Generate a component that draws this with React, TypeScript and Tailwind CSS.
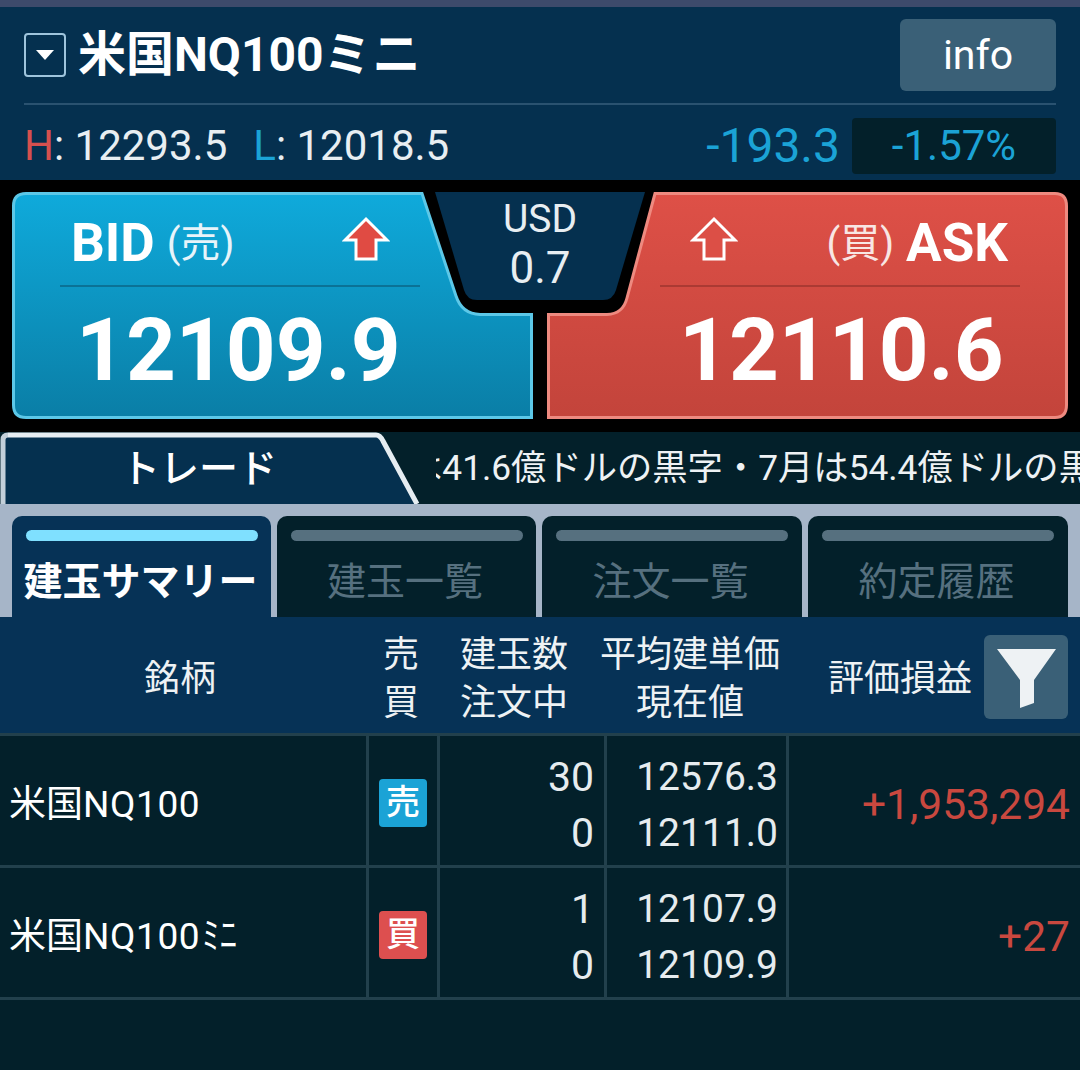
const font = { fontFamily: '"Roboto","Noto Sans CJK JP",sans-serif' };

function Arrow({ fill }: { fill: string }) {
  return (
    <svg width="48" height="46" viewBox="0 0 48 46">
      <path d="M24 3 L45 24 L34 24 L34 43 L14 43 L14 24 L3 24 Z" fill={fill} stroke="#fff" strokeWidth="3" strokeLinejoin="miter" />
    </svg>
  );
}

function BidShape() {
  return (
    <svg className="absolute inset-0" width="521" height="227" viewBox="0 0 521 227">
      <defs>
        <linearGradient id="bidg" x1="0" y1="0" x2="0" y2="1">
          <stop offset="0" stopColor="#0faadb" />
          <stop offset="1" stopColor="#0a7ea6" />
        </linearGradient>
      </defs>
      <path
        d="M14 1.5 H410 L444 104 Q450 122 468 122.5 H519.5 V225.5 H14 Q1.5 225.5 1.5 213 V14 Q1.5 1.5 14 1.5 Z"
        fill="url(#bidg)"
        stroke="#5cc8e8"
        strokeWidth="3"
      />
    </svg>
  );
}

function AskShape() {
  return (
    <svg className="absolute inset-0" width="521" height="227" viewBox="0 0 521 227">
      <defs>
        <linearGradient id="askg" x1="0" y1="0" x2="0" y2="1">
          <stop offset="0" stopColor="#de5047" />
          <stop offset="1" stopColor="#c3443b" />
        </linearGradient>
      </defs>
      <path
        d="M108 1.5 H508 Q519.5 1.5 519.5 14 V213 Q519.5 225.5 508 225.5 H1.5 V122.5 H60 Q76 122 80 106 Z"
        fill="url(#askg)"
        stroke="#ee8a80"
        strokeWidth="3"
      />
    </svg>
  );
}

function SubTab({ label, active }: { label: string; active?: boolean }) {
  return (
    <div className={`rounded-t-[10px] pt-[14px] flex flex-col items-center ${active ? 'bg-[#063256]' : 'bg-[#03202a]'}`}>
      <div className={`h-[11px] w-[232px] rounded-full ${active ? 'bg-[#7fe0ff]' : 'bg-[#56707f]'}`} />
      <div className={`mt-[18px] text-[39px] leading-[46px] whitespace-nowrap ${active ? 'text-white font-bold pr-[2px]' : 'text-[#56707f] pr-[3px]'}`}>{label}</div>
    </div>
  );
}

function Row({ name, mini, side, a, b, c, d, pl }: { name: string; mini?: boolean; side: string; a: string; b: string; c: string; d: string; pl: string }) {
  return (
    <div className="grid grid-cols-[369px_71px_167px_182px_291px] h-[132px] border-b-[3px] border-[#22404c]">
      <div className="flex items-center pl-[9px] pt-[8px] text-[37px] text-white border-r-[3px] border-[#22404c]">
        <span>米国<span className="tracking-[0.6px]">{name}</span></span>
        {mini && <span className="inline-block w-[38px] ml-[2px] whitespace-nowrap origin-left scale-x-[0.48]">ミニ</span>}
      </div>
      <div className="flex items-center justify-center pt-[4px] border-r-[3px] border-[#22404c]">
        <div className={`w-[48px] h-[48px] rounded-[4px] flex items-center justify-center text-[34px] font-medium text-white ${side === '売' ? 'bg-[#1ba3d6]' : 'bg-[#dd4f4f]'}`}>{side}</div>
      </div>
      <div className="flex flex-col justify-center items-end pr-[10px] pt-[9px] text-[41px] leading-[56px] text-[#e6ecef] border-r-[3px] border-[#22404c]">
        <div>{a}</div>
        <div>{b}</div>
      </div>
      <div className="flex flex-col justify-center items-end pr-[8px] pt-[9px] text-[39px] leading-[56px] text-[#e6ecef] border-r-[3px] border-[#22404c]">
        <div>{c}</div>
        <div>{d}</div>
      </div>
      <div className="flex items-center justify-end pr-[10px] pt-[8px] text-[42.5px] text-[#c9483f]">{pl}</div>
    </div>
  );
}

export default function App() {
  return (
    <div className="w-[1080px] h-[1070px] bg-[#03202a] flex flex-col overflow-hidden" style={font}>
      <div className="h-[7px] bg-[#3d4a6b]" />

      <header className="h-[173px] bg-[#05304f] flex flex-col">
        <div className="h-[98px] shrink-0 mx-[24px] flex items-center border-b-[2px] border-[#2a5270]">
          <div className="w-[42px] h-[44px] rounded-[4px] border-[2px] border-[#9fc4dc] flex items-center justify-center">
            <svg width="20" height="12" viewBox="0 0 20 12"><path d="M1 1 H19 L10 11 Z" fill="#fff" /></svg>
          </div>
          <div className="ml-[12px] text-[48px] leading-[56px] font-bold text-white whitespace-nowrap">米国NQ100<span className="tracking-[1px]">ミニ</span></div>
          <div className="ml-auto w-[156px] h-[72px] rounded-[6px] bg-[#3a6077] flex items-center justify-center text-[41px] leading-[48px] text-white">info</div>
        </div>
        <div className="flex-1 flex items-center pl-[24px] pr-[24px] pt-[7px]">
          <div className="text-[42px] leading-[56px] text-[#e8eef2] whitespace-nowrap flex items-center">
            <span className="text-[#d5504f]">H</span>
            <span>: 12293.5</span>
            <span className="ml-[26px] text-[#1ba3d6]">L</span>
            <span>: 12018.5</span>
          </div>
          <div className="ml-auto text-[48px] leading-[56px] text-[#1ba3d6]">-193.3</div>
          <div className="ml-[12px] w-[204px] h-[56px] rounded-[4px] bg-[#03202a] flex items-center justify-center text-[42px] leading-[50px] text-[#1ba3d6]">-1.57%</div>
        </div>
      </header>

      <section className="relative h-[252px] bg-black px-[12px] pt-[12px] flex gap-[14px]">
        <div className="relative w-[521px] h-[227px] text-white">
          <BidShape />
          <div className="relative ml-[48px] mr-[113px] h-[95px] border-b-[2px] border-[#0b7296] flex items-center pl-[11px] pt-[11px]">
            <span className="text-[53px] font-bold">BID</span>
            <span className="ml-[12px] text-[40px] text-[#e8f4fa]">(売)</span>
            <span className="ml-auto mr-[30px] mt-[-10px]"><Arrow fill="#e04b43" /></span>
          </div>
          <div className="relative mt-[4px] text-[87px] font-bold leading-[118px] pl-[64px] whitespace-nowrap">12109.9</div>
        </div>
        <div className="relative w-[521px] h-[227px] text-white">
          <AskShape />
          <div className="relative ml-[113px] mr-[48px] h-[95px] border-b-[2px] border-[#ab3a33] flex items-center pr-[12px] pt-[11px]">
            <span className="ml-[30px] mt-[-10px]"><Arrow fill="#dc4f46" /></span>
            <span className="ml-auto text-[40px] text-[#f8e6e4]">(買)</span>
            <span className="ml-[12px] text-[53px] font-bold">ASK</span>
          </div>
          <div className="relative mt-[4px] text-[87px] font-bold leading-[118px] pl-[132px] whitespace-nowrap">12110.6</div>
        </div>
        <div className="absolute left-[433px] top-[12px] w-[214px] h-[108px] flex flex-col items-center text-[#e8eef2]">
          <svg className="absolute inset-0" width="214" height="108" viewBox="0 0 214 108">
            <path d="M2 0 H212 L183 98 Q180 108 170 108 H44 Q34 108 31 98 Z" fill="#05304f" />
          </svg>
          <div className="relative text-[39px] leading-[46px] mt-[4px]">USD</div>
          <div className="relative text-[44px] leading-[50px] mt-[1px]">0.7</div>
        </div>
      </section>

      <section className="relative h-[72px] bg-[#03202a] flex overflow-hidden">
        <div className="relative w-[420px] shrink-0 flex items-center justify-center">
          <svg className="absolute inset-0" width="420" height="72" viewBox="0 0 420 72">
            <path d="M3 72 V8 Q3 3 8 3 H376 Q380 3 383 9 L417 72 Z" fill="#05304f" />
            <path d="M3 72 V8 Q3 3 8 3" fill="none" stroke="#c3cfd9" strokeWidth="5" />
            <path d="M8 3 H376 Q380 3 383 9 L417 72" fill="none" stroke="#e6edf2" strokeWidth="5" />
          </svg>
          <span className="relative text-[39px] font-medium text-white pr-[22px] pt-[2px]">トレード</span>
        </div>
        <div className="flex-1 ml-[16px] overflow-hidden flex items-center">
          <span className="whitespace-nowrap text-[35.3px] text-[#eef2f4] -ml-[29px]">は41.6億ドルの黒字・7月は54.4億ドルの黒字</span>
        </div>
      </section>

      <section className="h-[113px] bg-[#a6b5c8] pt-[12px] px-[12px] grid grid-cols-[259px_259px_260px_260px] gap-[6px] overflow-hidden">
        <SubTab label="建玉サマリー" active />
        <SubTab label="建玉一覧" />
        <SubTab label="注文一覧" />
        <SubTab label="約定履歴" />
      </section>

      <section className="h-[116px] pt-[8px] bg-[#063256] grid grid-cols-[360px_82px_144px_208px_286px] items-center text-[36px] text-[#eef2f4] text-center leading-[48px]">
        <div>銘柄</div>
        <div>売<br />買</div>
        <div>建玉数<br />注文中</div>
        <div>平均建単価<br />現在値</div>
        <div className="flex items-center justify-end gap-[12px] pr-[12px]">
          <span>評価損益</span>
          <div className="w-[84px] h-[84px] -mt-[4px] rounded-[6px] bg-[#3a6077] flex items-center justify-center">
            <svg width="84" height="84" viewBox="0 0 84 84"><path d="M13 14 H72 L50 45 V68 L36 73 V45 Z" fill="#eef2f4" /></svg>
          </div>
        </div>
      </section>

      <div className="h-[3px] bg-[#22404c]" />
      <Row name="NQ100" side="売" a="30" b="0" c="12576.3" d="12111.0" pl="+1,953,294" />
      <Row name="NQ100" mini side="買" a="1" b="0" c="12107.9" d="12109.9" pl="+27" />
    </div>
  );
}
